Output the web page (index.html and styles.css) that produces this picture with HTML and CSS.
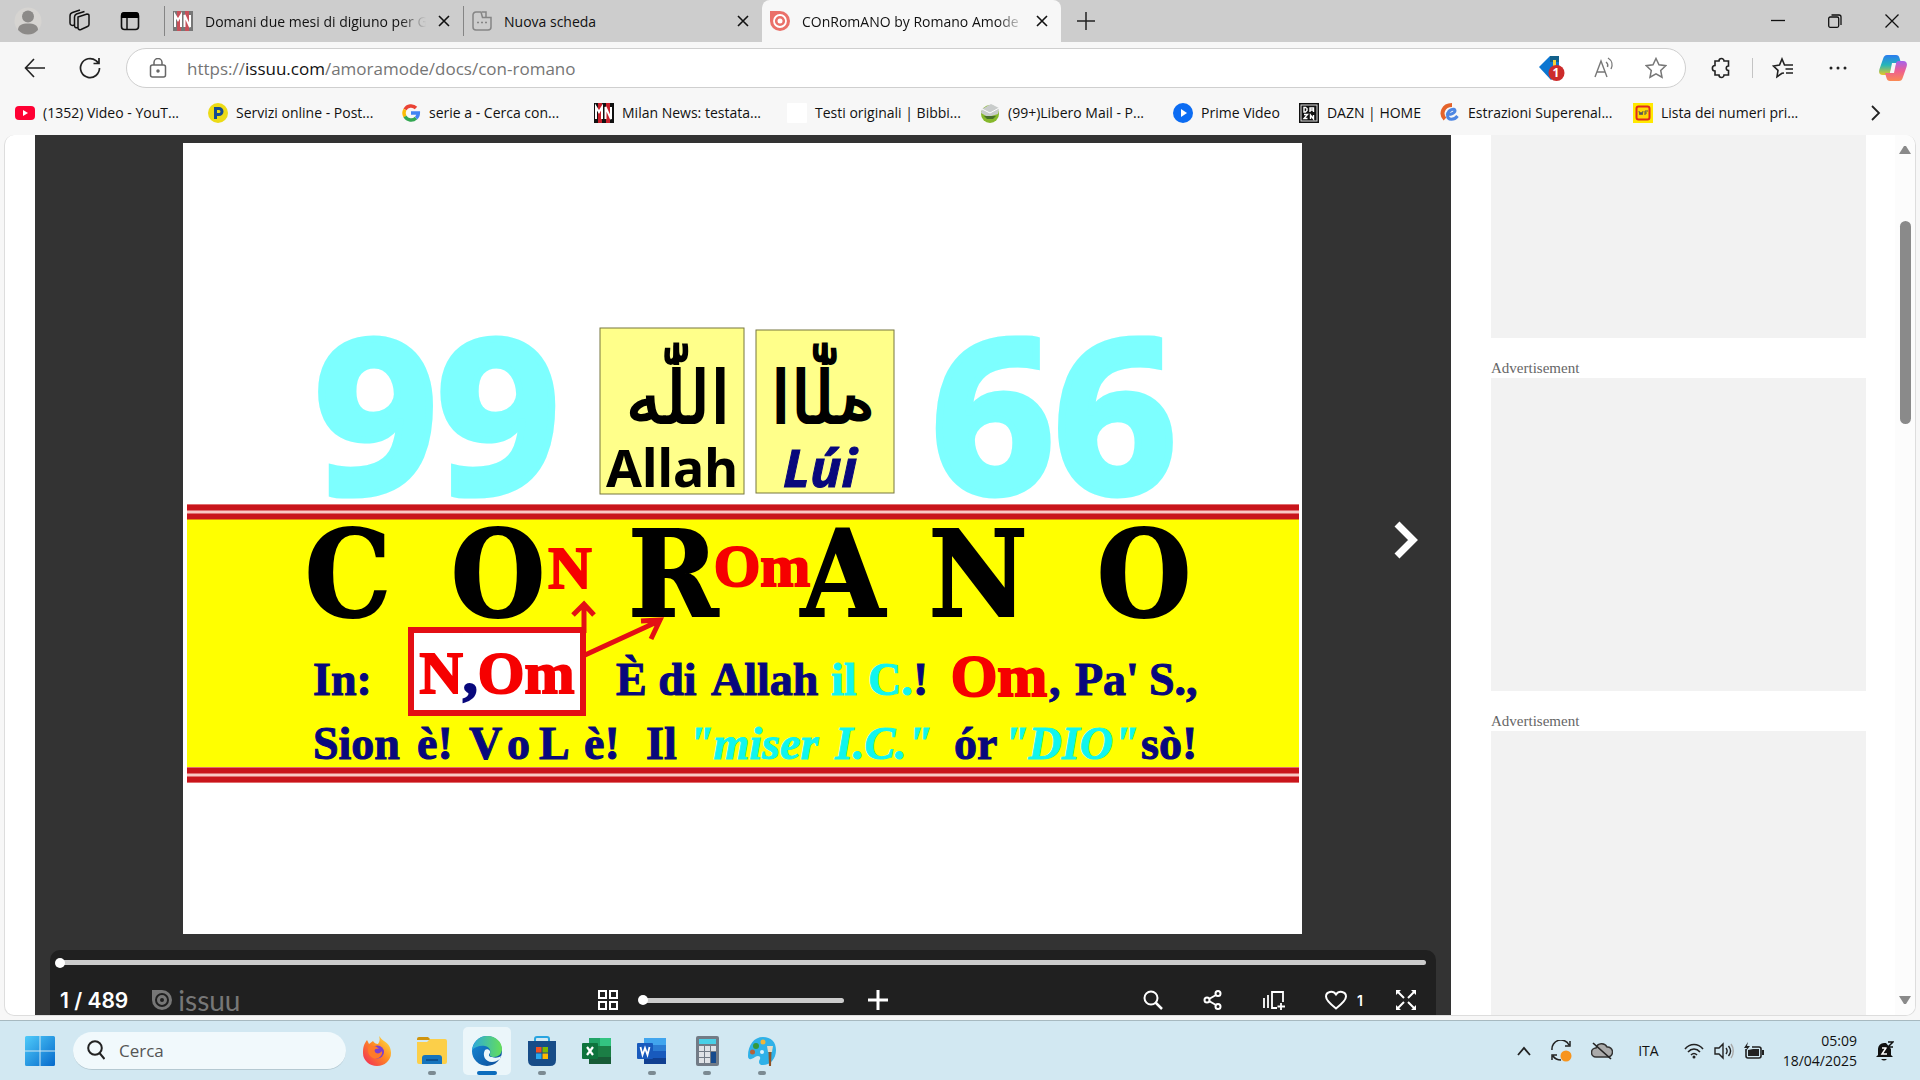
FILE: index.html
```html
<!DOCTYPE html>
<html lang="it">
<head>
    <meta charset="UTF-8">
    <meta name="viewport" content="width=device-width, initial-scale=1.0">
    <title>COnRomANO by Romano Amodeo</title>
    <link rel="stylesheet" href="styles.css">
</head>
<body>

    <header class="browser">
        <div class="tab-bar">
            <button class="icon-btn profile" aria-label="Profilo">
                <svg width="28" height="28" viewBox="0 0 28 28"><circle cx="14" cy="14" r="13.5" fill="#d6d4d1"/><circle cx="14" cy="9.500" r="6" fill="#8c8a88"/><path d="M4 23c0-5 4-6.500 10-6.500S24 18 24 23c-3 3-6 4.500-10 4.500S7 26 4 23z" fill="#8c8a88"/></svg>
            </button>
            <button class="icon-btn" aria-label="Aree di lavoro">
                <svg width="24" height="24" viewBox="0 0 24 24" fill="none" stroke="#111" stroke-width="1.500"><path d="M11 8l9-3c1 0 2 .5 2 1.500v9c0 1-.5 1.700-1.500 2l-6.500 3c-1.500.5-3 0-3-1.500z"/><path d="M11 18.500c-2 .5-3.500 0-3.500-1.500V8c0-2 1-2.500 2-3l8-2.500M7.500 16C5 17 3 16 3 14V7c0-2 1-3 2.500-3.500L13 1"/></svg>
            </button>
            <button class="icon-btn" aria-label="Schede verticali">
                <svg width="20" height="20" viewBox="0 0 20 20"><rect x="1.500" y="2" width="17" height="16.500" rx="3" fill="none" stroke="#111" stroke-width="1.600"/><path d="M1 7V4a3 3 0 0 1 3-3h12a3 3 0 0 1 3 3v3z"/><path d="M7 7v11" stroke="#111" stroke-width="1.500"/></svg>
            </button>
            <div class="tab">
                <svg width="20" height="20" viewBox="0 0 20 20"><rect width="20" height="20" fill="#777"/><path d="M4 0h4v20H4zM12 0h4v20h-4z" fill="#c8505a"/><path d="M2 16V4l3 5 3-5v12M11.500 16V4l5.500 12V4" fill="none" stroke="#fff" stroke-width="2"/></svg>
                <span class="tab-title fade">Domani due mesi di digiuno per G</span>
                <button class="close" aria-label="Chiudi scheda"><svg width="12" height="12" viewBox="0 0 12 12"><path d="M1 1l10 10M11 1L1 11" stroke="#111" stroke-width="1.600"/></svg></button>
            </div>
            <div class="tab tab-new">
                <svg width="20" height="20" viewBox="0 0 20 20" fill="none" stroke="#858585" stroke-width="1.500"><path d="M9 1H4a3 3 0 0 0-3 3v12a3 3 0 0 0 3 3h12a3 3 0 0 0 3-3V6.500h-8.500zM10 1h4v5"/><path d="M5 11.500h2M9 11.500h2M13 11.500h2"/></svg>
                <span class="tab-title">Nuova scheda</span>
                <button class="close" aria-label="Chiudi scheda"><svg width="12" height="12" viewBox="0 0 12 12"><path d="M1 1l10 10M11 1L1 11" stroke="#111" stroke-width="1.600"/></svg></button>
            </div>
            <div class="tab tab-active">
                <svg width="20" height="20" viewBox="0 0 20 20"><path d="M0 0h10a10 10 0 1 1-10 10z" fill="#ea7069"/><circle cx="10" cy="10" r="6" fill="none" stroke="#fff" stroke-width="1.800"/><circle cx="10" cy="10" r="2.500" fill="#fff"/></svg>
                <span class="tab-title fade">COnRomANO by Romano Amode</span>
                <button class="close" aria-label="Chiudi scheda"><svg width="12" height="12" viewBox="0 0 12 12"><path d="M1 1l10 10M11 1L1 11" stroke="#111" stroke-width="1.600"/></svg></button>
            </div>
            <button class="icon-btn" aria-label="Nuova scheda"><svg width="18" height="18" viewBox="0 0 18 18"><path d="M9 0v18M0 9h18" stroke="#222" stroke-width="1.500"/></svg></button>
            <div class="window-buttons">
                <button aria-label="Riduci"><svg width="14" height="14" viewBox="0 0 14 14"><path d="M0 6.500h14" stroke="#111" stroke-width="1.300"/></svg></button>
                <button aria-label="Ripristina"><svg width="14" height="14" viewBox="0 0 14 14" fill="none" stroke="#111" stroke-width="1.300"><rect x=".7" y="3" width="10" height="10.300" rx="1.500"/><path d="M3.500 1H11a2 2 0 0 1 2 2v8"/></svg></button>
                <button aria-label="Chiudi"><svg width="14" height="14" viewBox="0 0 14 14"><path d="M.5.500l13 13M13.500.500l-13 13" stroke="#111" stroke-width="1.300"/></svg></button>
            </div>
        </div>

        <div class="toolbar">
            <button class="icon-btn" aria-label="Indietro"><svg width="22" height="20" viewBox="0 0 22 20" fill="none" stroke="#222" stroke-width="1.600"><path d="M21 10H2M10 1L1.500 10l8.500 9"/></svg></button>
            <button class="icon-btn" aria-label="Aggiorna"><svg width="22" height="22" viewBox="0 0 22 22" fill="none" stroke="#222" stroke-width="1.700"><path d="M20.500 11A9.500 9.500 0 1 1 17 3.700L19.500 6M20 1v5.500h-5.500"/></svg></button>
            <div class="address">
                <svg width="18" height="20" viewBox="0 0 18 20" fill="none" stroke="#666" stroke-width="1.500"><rect x="1.500" y="7" width="15" height="12" rx="2"/><path d="M5 7V4.500a4 4 0 0 1 8 0V7"/><circle cx="9" cy="13" r="1" fill="#666"/></svg>
                <a class="url" href="#">https://<b>issuu.com</b>/amoramode/docs/con-romano</a>
                <button class="icon-btn" aria-label="Offerte">
                    <svg width="26" height="26" viewBox="0 0 26 26"><path d="M0 12L11 1h9v18l-8 6z" fill="#0b76d1"/><path d="M11 1h9v6h-9z" fill="#13618b"/><path d="M14 5h3v6h-3z" fill="#f2d33b"/><circle cx="17.500" cy="18" r="8" fill="#cc2b2b"/><text class="tag-count" x="17" y="22" text-anchor="middle">1</text></svg>
                </button>
                <button class="icon-btn" aria-label="Lettura ad alta voce"><svg width="20" height="22" viewBox="0 0 20 22" fill="none" stroke="#777" stroke-width="1.400"><path d="M1 20L7 4l6 16M3 15h8M12 5c2 1.500 2 3.500 1.500 5M14 1c4 2.500 5 7 3 11"/></svg></button>
                <button class="icon-btn" aria-label="Preferiti"><svg width="22" height="22" viewBox="0 0 22 22" fill="none" stroke="#777" stroke-width="1.500"><path d="M11 1.500l3 6.300 6.700.9-5 4.700 1.300 6.800-6-3.400-6 3.400 1.300-6.800-5-4.700 6.700-.9z"/></svg></button>
            </div>
            <button class="icon-btn" aria-label="Estensioni"><svg width="22" height="22" viewBox="0 0 22 22" fill="none" stroke="#222" stroke-width="1.600"><path d="M8 4a2.500 2.500 0 0 1 5 0h4.500v5c-3 0-3 4.500 0 4.500V18H13a2.500 2.500 0 0 1-5 0H4v-4c-3.500 0-3.500-5.500 0-5.500V4z"/></svg></button>
            <span class="divider"></span>
            <button class="icon-btn" aria-label="Elenco preferiti"><svg width="22" height="22" viewBox="0 0 22 22" fill="none" stroke="#222" stroke-width="1.600"><path d="M12 16l-2 .3-5 3.400 1-6.300L1.500 9l6-1L10 2l2.500 6H21M13.500 12H21M14 16h7"/></svg></button>
            <button class="icon-btn" aria-label="Altro"><svg width="18" height="4" viewBox="0 0 18 4" fill="#222"><circle cx="2" cy="2" r="1.500"/><circle cx="9" cy="2" r="1.500"/><circle cx="16" cy="2" r="1.500"/></svg></button>
            <button class="icon-btn" aria-label="Copilot">
                <svg width="28" height="26" viewBox="0 0 28 26">
                    <defs>
                        <linearGradient id="cp1" x1="0" y1="0" x2="0" y2="1"><stop offset="0" stop-color="#2a7cf0"/><stop offset=".5" stop-color="#26b6b8"/><stop offset="1" stop-color="#e8c723"/></linearGradient>
                        <linearGradient id="cp2" x1="0" y1="0" x2="0" y2="1"><stop offset="0" stop-color="#a463ec"/><stop offset=".5" stop-color="#ee5f91"/><stop offset="1" stop-color="#fa8a52"/></linearGradient>
                    </defs>
                    <path d="M8 0h9c2 0 3 1 3.500 3L22 8h-5c-3 0-3 2-4 5l-2 5c-1 2-2 2-4 2H4c-4 0-4.500-3-3.500-6L4 4c1-3 2-4 4-4z" fill="url(#cp1)"/>
                    <path d="M20 26h-9c-2 0-3-1-3.500-3L6 18h5c3 0 3-2 4-5l2-5c1-2 2-2 4-2h3c4 0 4.500 3 3.500 6L24 22c-1 3-2 4-4 4z" fill="url(#cp2)"/>
                    <path d="M13 8h4l-2 10h-4z" fill="#f7f7f7"/>
                </svg>
            </button>
        </div>

        <nav class="bookmarks">
            <a href="#"><svg width="20" height="20" viewBox="0 0 20 20"><rect y="3" width="20" height="14" rx="4" fill="#f03"/><path d="M8 7l5 3-5 3z" fill="#fff"/></svg>(1352) Video - YouT...</a>
            <a href="#"><svg width="20" height="20" viewBox="0 0 20 20"><circle cx="10" cy="10" r="10" fill="#ecdb16"/><path d="M7.500 16V5.500H11a3 3 0 0 1 0 6H8" fill="none" stroke="#164a91" stroke-width="3"/></svg>Servizi online - Post...</a>
            <a href="#"><svg width="20" height="20" viewBox="0 0 20 20" fill="none" stroke-width="3.500"><path d="M4 6.500A7 7 0 0 1 15 5" stroke="#ea4335"/><path d="M4 13.500a7 7 0 0 1 0-7" stroke="#fbbc05"/><path d="M15 15a7 7 0 0 1-11-1.500" stroke="#34a853"/><path d="M10 10h7.300c0 2-.8 4-2.300 5" stroke="#4285f4"/></svg>serie a - Cerca con...</a>
            <a href="#"><svg width="20" height="20" viewBox="0 0 20 20"><rect width="20" height="20" fill="#111"/><path d="M4 0h4v20H4zM12 0h4v20h-4z" fill="#c8202c"/><path d="M2 16V4l3 5 3-5v12M11.500 16V4l5.500 12V4" fill="none" stroke="#fff" stroke-width="2"/></svg>Milan News: testata...</a>
            <a href="#"><svg width="20" height="20" viewBox="0 0 20 20"><rect width="20" height="20" rx="1" fill="#fff"/></svg>Testi originali | Bibbi...</a>
            <a href="#"><svg width="20" height="20" viewBox="0 0 20 20"><circle cx="10" cy="11" r="9" fill="#86b82c"/><path d="M2 6l9-5 8 4-1 6-10 3-7-4z" fill="#c9cccb"/><path d="M2 6l8 4 9-5" fill="none" stroke="#fff"/><path d="M4 13h12l-3 3H7z" fill="#49702a"/></svg>(99+)Libero Mail - P...</a>
            <a class="short" href="#"><svg width="20" height="20" viewBox="0 0 20 20"><circle cx="10" cy="10" r="10" fill="#0c6cf2"/><path d="M8 6l6 4-6 4z" fill="#fff"/></svg>Prime Video</a>
            <a class="short" href="#"><svg width="20" height="20" viewBox="0 0 20 20"><rect width="20" height="20" fill="#111"/><rect x="2" y="2" width="16" height="16" fill="none" stroke="#ddd"/><path d="M5 4.500h1.500l1.500 1v2L6.500 9H5zM11 9V5h3.500v4M11 7h3.500M5 11.500h3.500L5 15.500h3.500M11.500 16v-4l3 4v-4" fill="none" stroke="#fff" stroke-width="1.400"/></svg>DAZN | HOME</a>
            <a href="#"><svg width="20" height="20" viewBox="0 0 20 20" fill="none" stroke-width="4"><path d="M5 16C0 11 3 2 12 2" stroke="#e4632b"/><path d="M6 11c5 1 9-1 9-3.500S8 6 7.500 12c0 6 7 5 10 1" stroke="#4e86e2" stroke-width="3"/></svg>Estrazioni Superenal...</a>
            <a href="#"><svg width="20" height="20" viewBox="0 0 20 20"><rect width="20" height="20" fill="#ffe900"/><rect x="3.500" y="3.500" width="13" height="13" rx="2" fill="#ffd800" stroke="#e02a1c" stroke-width="2"/><path d="M6 8l1 4 1-3 1 3 1-4M12 12V8h3M12 10h2" fill="none" stroke="#555"/></svg>Lista dei numeri pri...</a>
            <button class="icon-btn more" aria-label="Altri preferiti"><svg width="10" height="16" viewBox="0 0 10 16"><path d="M1 1l7 7-7 7" fill="none" stroke="#222" stroke-width="1.800"/></svg></button>
        </nav>
    </header>

    <main class="page">
        <section class="reader">
            <div class="stage">
                <svg class="cover" viewBox="0 0 1119 791" role="img" aria-label="Copertina">
                    <rect width="1119" height="791" fill="#fff"/>
                    <g class="numbers">
                        <text x="254" y="350" text-anchor="middle">99</text>
                        <text x="871" y="350" text-anchor="middle">66</text>
                    </g>

                    <g fill="#ffff8a" stroke="#77773f">
                        <rect x="417" y="185" width="144" height="166"/>
                        <rect x="573" y="187" width="138" height="163"/>
                    </g>
                    <text class="arabic" x="495" y="280" text-anchor="middle">اللّٰه</text>
                    <text class="arabic" x="-640" y="280" text-anchor="middle" transform="scale(-1 1)">اللّٰه</text>
                    <text class="panel-name" x="489" y="344" text-anchor="middle">Allah</text>
                    <text class="panel-name navy italic" x="637" y="344" text-anchor="middle">Lúi</text>

                    <!-- yellow band between double red rules -->
                    <rect x="4" y="361" width="1112" height="279" fill="#f9c9c4"/>
                    <rect x="4" y="376" width="1112" height="248" fill="#ff0"/>
                    <path d="M4 364.500h1112M4 373.500h1112M4 627.500h1112M4 636.500h1112" stroke="#c9151b" stroke-width="6"/>

                    <g class="title-letters">
                        <text x="165" y="473" text-anchor="middle">C</text>
                        <text x="315" y="473" text-anchor="middle">O</text>
                        <text x="490" y="473" text-anchor="middle">R</text>
                        <text x="660" y="473" text-anchor="middle">A</text>
                        <text x="795" y="473" text-anchor="middle">N</text>
                        <text x="961" y="473" text-anchor="middle">O</text>
                    </g>
                    <g class="red-letters">
                        <text x="387" y="445" text-anchor="middle">N</text>
                        <text x="579" y="443" text-anchor="middle">Om</text>
                    </g>

                    <rect x="228" y="487" width="172" height="83" fill="#fff" stroke="#e30f14" stroke-width="6"/>
                    <g fill="none" stroke="#e30f14" stroke-width="5">
                        <path d="M401 490V463M390 472l11-11 10 11"/>
                        <path d="M402 512l74-34M458 478l19-1-9 19"/>
                    </g>
                    <g class="red-letters">
                        <text x="314" y="550" text-anchor="middle">N<tspan class="navy">,</tspan>Om</text>
                        <text x="816" y="553" text-anchor="middle">Om</text>
                    </g>

                    <g class="verse">
                        <text x="130" y="552">In:</text>
                        <text x="433" y="552">È di</text>
                        <text x="528" y="552">Allah</text>
                        <text class="cyan" x="648" y="552">il</text>
                        <text class="cyan" x="685" y="552">C.</text>
                        <text x="730" y="552">!</text>
                        <text x="866" y="552">,</text>
                        <text x="892" y="552">Pa'</text>
                        <text x="966" y="552">S.,</text>
                        <text x="130" y="616">Sion</text>
                        <text x="234" y="616">è!</text>
                        <text x="286" y="616">V</text>
                        <text x="324" y="616">o</text>
                        <text x="356" y="616">L</text>
                        <text x="401" y="616">è!</text>
                        <text x="463" y="616">Il</text>
                        <text class="cyan italic" x="505" y="616">"miser</text>
                        <text class="cyan italic" x="652" y="616">I.C."</text>
                        <text x="771" y="616">ór</text>
                        <text class="cyan italic" x="820" y="616">"DIO"</text>
                        <text x="958" y="616">sò!</text>
                    </g>
                </svg>
                <button class="next" aria-label="Pagina successiva"><svg width="24" height="38" viewBox="0 0 24 38"><path d="M3 3l16 16L3 35" fill="none" stroke="#fff" stroke-width="7"/></svg></button>
            </div>

            <div class="controls">
                <input class="range" type="range" min="1" max="489" value="1" aria-label="Pagina">
                <div class="control-row">
                    <div class="control-left">
                        <span class="page-count">1 / 489</span>
                        <a class="logo" href="#"><svg width="20" height="20" viewBox="0 0 20 20"><path d="M0 0h10a10 10 0 1 1-10 10z" fill="#777"/><circle cx="10" cy="10" r="6" fill="none" stroke="#202020" stroke-width="2"/><circle cx="10" cy="10" r="2" fill="#202020"/></svg>issuu</a>
                    </div>
                    <div class="control-center">
                        <button aria-label="Miniature"><svg width="20" height="20" viewBox="0 0 20 20" fill="none" stroke="#fff" stroke-width="2"><path d="M1 1h7v7H1zM12 1h7v7h-7zM1 12h7v7H1zM12 12h7v7h-7z"/></svg></button>
                        <input class="range zoom" type="range" min="0" max="100" value="0" aria-label="Zoom">
                        <button aria-label="Ingrandisci"><svg width="20" height="20" viewBox="0 0 20 20"><path d="M10 0v20M0 10h20" stroke="#fff" stroke-width="3"/></svg></button>
                    </div>
                    <div class="control-right">
                        <button aria-label="Cerca"><svg width="20" height="20" viewBox="0 0 20 20" fill="none" stroke="#fff" stroke-width="2"><circle cx="8" cy="8" r="6.500"/><path d="M12.500 12.500L19 19" stroke-width="2.500"/></svg></button>
                        <button aria-label="Condividi"><svg width="20" height="20" viewBox="0 0 20 20" fill="none" stroke="#fff" stroke-width="2"><circle cx="4" cy="10" r="2.500"/><circle cx="15" cy="3.500" r="2.500"/><circle cx="15" cy="16.500" r="2.500"/><path d="M6 9l7-4M6 11l7 4"/></svg></button>
                        <button aria-label="Aggiungi alla raccolta"><svg width="22" height="20" viewBox="0 0 22 20" fill="none" stroke="#fff" stroke-width="1.800"><path d="M1 8v10M5 5v13M14 18H9V2h11v10M18 13v7M14.500 16.500H22"/></svg></button>
                        <button class="like" aria-label="Mi piace"><svg width="22" height="20" viewBox="0 0 22 20"><path d="M11 18.500C4 13 1 10 1 6.500 1 1.500 8 0 11 4.500 14 0 21 1.500 21 6.500c0 3.500-3 6.500-10 12z" fill="none" stroke="#fff" stroke-width="2"/></svg>1</button>
                        <button aria-label="Schermo intero"><svg width="20" height="20" viewBox="0 0 20 20" stroke="#fff" stroke-width="2"><path d="M2 2l6 6M18 2l-6 6M2 18l6-6M18 18l-6-6"/><path d="M0 0h5L0 5zM20 0v5l-5-5zM0 20v-5l5 5zM20 20h-5l5-5z" fill="#fff" stroke="none"/></svg></button>
                    </div>
                </div>
            </div>
        </section>

        <aside class="ads">
            <div class="ad ad-first"></div>
            <p>Advertisement</p>
            <div class="ad"></div>
            <p>Advertisement</p>
            <div class="ad"></div>
        </aside>

        <div class="scrollbar">
            <svg width="12" height="10" viewBox="0 0 12 10"><path d="M5 1h2l5 8H0z" fill="#8a8a8a"/></svg>
            <div class="thumb"></div>
            <svg class="down" width="12" height="10" viewBox="0 0 12 10"><path d="M0 1h12L7 9H5z" fill="#8a8a8a"/></svg>
        </div>
    </main>

    <footer class="taskbar">
        <button class="app" aria-label="Start"><svg width="30" height="30" viewBox="0 0 30 30"><defs><linearGradient id="win" x1="0" y1="0" x2="1" y2="1"><stop offset="0" stop-color="#4fcbfa"/><stop offset="1" stop-color="#0669cb"/></linearGradient></defs><path d="M0 1.500Q0 0 1.500 0h13v14.500H0zM15.500 0h13Q30 0 30 1.500v13H15.500zM0 15.500h14.500V30h-13Q0 30 0 28.500zM15.500 15.500H30v13q0 1.500-1.500 1.500h-13z" fill="url(#win)"/></svg></button>
        <label class="search">
            <svg width="18" height="20" viewBox="0 0 18 20" fill="none" stroke="#222" stroke-width="2"><circle cx="8" cy="8" r="6.800"/><path d="M12.500 13l5 6"/></svg>
            <input type="text" placeholder="Cerca">
        </label>
        <button class="app" aria-label="Firefox"><svg width="30" height="30" viewBox="0 0 30 30"><defs><linearGradient id="ff" x1="1" y1="0" x2="0" y2="1"><stop offset="0" stop-color="#fff04a"/><stop offset=".45" stop-color="#ff8b22"/><stop offset="1" stop-color="#f0225e"/></linearGradient></defs><path d="M17 0c2 2 3 4 5 5 5 3 7 7 7 12a14 13 0 0 1-28 0C1 11 2 8 5 4l2 4 4-3c1 2 3 3 5 3 2-3 2-5 1-8z" fill="url(#ff)"/><circle cx="15.500" cy="16" r="6.500" fill="#7b3fd0"/><path d="M7 10c4-1 8 0 10 3-4-1-5 1-4 3s5 2 7-1c1 5-4 9-9 7s-6-8-4-12z" fill="#ff7a29"/></svg></button>
        <button class="app running" aria-label="Esplora file"><svg width="30" height="30" viewBox="0 0 30 30"><path d="M0 3q0-2 2-2h9l3 3H0z" fill="#d0940e"/><path d="M0 6h10l3-3h15q2 0 2 2v21q0 2-2 2H2q-2 0-2-2z" fill="#fccf49"/><path d="M5 28v-6q0-3 3-3h14q3 0 3 3v6z" fill="#1674bd"/><path d="M9 23h12v2H9z" fill="#0d5291"/></svg></button>
        <button class="app running current" aria-label="Edge"><svg width="30" height="30" viewBox="0 0 30 30"><defs><linearGradient id="eg1"><stop offset="0" stop-color="#2ca8dd"/><stop offset="1" stop-color="#65df58"/></linearGradient><linearGradient id="eg2" x1="0" y1="0" x2="1" y2="1"><stop offset="0" stop-color="#168edc"/><stop offset="1" stop-color="#0c4a97"/></linearGradient></defs><circle cx="15" cy="15" r="15" fill="url(#eg2)"/><path d="M0 14C2 4 9 0 15 0c9 0 15 6 15 13 0 5-4 8-8 8-3 0-5-1-4-3 1-3 0-7-5-8C8 9 3 11 0 14z" fill="url(#eg1)"/><path d="M13 14c-3 5 0 12 7 12 3 0 5-1 8-3l1-3c-3 2-6 2-9 1-3 0-4-2-2-4 1-3-3-5-5-3z" fill="#eaf6fb"/></svg></button>
        <button class="app running" aria-label="Microsoft Store"><svg width="30" height="30" viewBox="0 0 30 30"><path d="M8 7V3q0-2 2-2h10q2 0 2 2v4" fill="none" stroke="#28a4e0" stroke-width="2"/><path d="M1 5h28v19q0 6-6 6H7q-6 0-6-6z" fill="#174c88"/><path d="M9 11h5.500v5.500H9z" fill="#f25022"/><path d="M15.500 11H21v5.500h-5.500z" fill="#7fba00"/><path d="M9 17.500h5.500V23H9z" fill="#28a8ef"/><path d="M15.500 17.500H21V23h-5.500z" fill="#ffb900"/></svg></button>
        <button class="app" aria-label="Excel"><svg width="30" height="30" viewBox="0 0 30 30"><path d="M7 2h22v26H7z" fill="#1b7e45"/><path d="M18 2h11v8H18z" fill="#33c481"/><path d="M7 2h11v8H7z" fill="#21a366"/><path d="M7 21h22v7H7z" fill="#185c37"/><rect y="7" width="16" height="16" rx="1" fill="#0d733c"/><path d="M5 11l6 8M11 11l-6 8" stroke="#fff" stroke-width="2.200"/></svg></button>
        <button class="app running" aria-label="Word"><svg width="30" height="30" viewBox="0 0 30 30"><path d="M7 2h22v26H7z" fill="#2b7cd3"/><path d="M7 2h22v7H7z" fill="#41a5ee"/><path d="M7 15h22v7H7z" fill="#185abd"/><path d="M7 22h22v6H7z" fill="#103f91"/><rect y="7" width="16" height="16" rx="1" fill="#185abd"/><path d="M3.500 11l2 8L8 12l2.500 7 2-8" fill="none" stroke="#fff" stroke-width="1.800"/></svg></button>
        <button class="app running" aria-label="Calcolatrice"><svg width="30" height="30" viewBox="0 0 30 30"><rect x="4" width="23" height="30" rx="2" fill="#727b86"/><path d="M7 3h17v5H7z" fill="#49cfe6"/><path d="M7 10h5v5H7zM13 10h5v5h-5zM19 10h5v5h-5zM7 16h5v5H7zM13 16h5v5h-5zM7 22h5v5H7zM13 22h5v5h-5z" fill="#dfe2e6"/><path d="M19 16h5v11h-5z" fill="#174b8d"/></svg></button>
        <button class="app running" aria-label="Paint"><svg width="30" height="30" viewBox="0 0 30 30"><path d="M16 1c8 0 13 5 13 13 0 9-6 15-13 15-4 0-5-3-3-6 1-3-2-4-5-2-4 3-7 3-7-1C1 9 7 1 16 1z" fill="#2fb1e8"/><circle cx="9" cy="10" r="3" fill="#36983b"/><circle cx="16" cy="6" r="2.500" fill="#f0b636"/><circle cx="5.500" cy="16" r="2.500" fill="#b4623a"/><circle cx="15" cy="16" r="2" fill="#d8f1fb"/><path d="M20 10h6l-1 6h-4z" fill="#e5dcc7"/><path d="M21.500 16h3l-.5 14h-2z" fill="#915326"/></svg></button>

        <div class="tray">
            <svg width="14" height="10" viewBox="0 0 14 10"><path d="M1 9l6-7 6 7" fill="none" stroke="#222" stroke-width="1.800"/></svg>
            <svg width="22" height="22" viewBox="0 0 22 22" fill="none" stroke="#222" stroke-width="1.500"><path d="M2 10A9 9 0 0 1 19 5M20 1v5h-5M11 20c-4 0-6-1-8-4M2 20v-5h5"/><circle cx="16" cy="16" r="5.500" fill="#f7941d" stroke="none"/></svg>
            <svg width="22" height="20" viewBox="0 0 22 20"><path d="M5 16a4.500 4.500 0 0 1 0-9 6 6 0 0 1 11-1 5 5 0 0 1 1 10z" fill="#aaa" stroke="#333" stroke-width="1.500"/><path d="M2 2l18 16" stroke="#222" stroke-width="1.600"/></svg>
            <span class="lang">ITA</span>
            <span class="status">
                <svg width="20" height="16" viewBox="0 0 20 16" fill="none" stroke="#222" stroke-width="1.600"><path d="M1 6c5-6 13-6 18 0M4 9c3.500-4 8.500-4 12 0M7 12c2-2 4-2 6 0"/><circle cx="10" cy="14" r="1.500" fill="#222" stroke="none"/></svg>
                <svg width="20" height="18" viewBox="0 0 20 18" fill="none" stroke="#222" stroke-width="1.400"><path d="M1 6h4l4-4v14l-4-4H1zM12 6c1.500 2 1.500 4 0 6M14.500 4c2.500 3 2.500 7 0 10"/><path d="M17 2c3 4 3 10 0 14" stroke="#aaa"/></svg>
                <svg width="20" height="18" viewBox="0 0 20 18"><path d="M2 7v7q0 2 2 2h11q2 0 2-2V7q0-2-2-2H8" fill="none" stroke="#222" stroke-width="1.600"/><path d="M4 8l5-1h6v7H4zM18 8h2v5h-2zM4 0L0 6h3L1 10l5-6H3z" fill="#222"/></svg>
            </span>
            <time class="clock">05:09<br>18/04/2025</time>
            <svg width="18" height="20" viewBox="0 0 18 20"><path d="M2 14V8a6 6 0 0 1 6-6h2l5 6v6l2 2H0zM5 18h6q-3 3-6 0z" fill="#111"/><path d="M6 7h4l-4 6h5" fill="none" stroke="#fff" stroke-width="1.500"/><path d="M12 1h5l-5 5h5" fill="none" stroke="#111" stroke-width="1.500"/></svg>
        </div>
    </footer>

</body>
</html>
```
FILE: styles.css
```css
* {
    box-sizing: border-box;
}
body {
    margin: 0;
    height: 100vh;
    display: flex;
    flex-direction: column;
    overflow: hidden;
    background: #f7f7f7;
    color: #111;
    font-family: "Open Sans", "Noto Sans", sans-serif;
    font-size: 14px;
}
button {
    padding: 0;
    border: none;
    background: none;
    color: inherit;
    font: inherit;
    cursor: pointer;
}
a {
    color: inherit;
    text-decoration: none;
}
svg {
    display: block;
    flex: none;
}
.icon-btn {
    width: 32px;
    height: 32px;
    display: flex;
    justify-content: center;
    align-items: center;
    flex: none;
}

/* Tabs */
.tab-bar {
    height: 42px;
    display: flex;
    align-items: center;
    gap: 19px;
    padding-left: 12px;
    background: #cdcdcd;
}
.tab-bar > .tab {
    margin-left: -1px;
}
.tab {
    width: 299px;
    height: 30px;
    display: flex;
    align-items: center;
    gap: 12px;
    padding: 0 13px 0 8px;
    border-left: 1px solid #858585;
}
.tab-bar > .tab + .tab {
    margin-left: -19px;
}
.tab-title {
    flex: 1;
    overflow: hidden;
    white-space: nowrap;
}
.fade {
    -webkit-mask-image: linear-gradient(to right, #000 88%, transparent);
    mask-image: linear-gradient(to right, #000 88%, transparent);
}
.tab-active {
    height: 42px;
    border: none;
    border-radius: 8px 8px 0 0;
    background: #f7f7f7;
}
.tab-bar > .tab-active + .icon-btn {
    margin-left: -10px;
}
.window-buttons {
    display: flex;
    margin-left: auto;
}
.window-buttons button {
    width: 57px;
    height: 42px;
    display: flex;
    justify-content: center;
    align-items: center;
}

/* Address bar */
.toolbar {
    height: 52px;
    display: flex;
    align-items: center;
    gap: 20px;
    padding: 0 11px 0 19px;
}
.toolbar > .icon-btn + .icon-btn {
    margin-left: 3px;
}
.address {
    flex: 1;
    height: 40px;
    display: flex;
    align-items: center;
    gap: 20px;
    padding: 0 13px 0 22px;
    border: 1px solid #cfcfcf;
    border-radius: 20px;
    background: #fff;
}
.url {
    flex: 1;
    color: #757575;
    font-size: 17px;
}
.url b {
    color: #111;
    font-weight: normal;
}
.tag-count {
    fill: #fff;
    font-size: 12px;
    font-weight: bold;
}
.divider {
    width: 1px;
    height: 20px;
    margin: 0 -6px;
    background: #c4c4c4;
}

/* Bookmarks */
.bookmarks {
    height: 41px;
    display: flex;
    align-items: center;
    padding: 0 28px 4px 15px;
    white-space: nowrap;
}
.bookmarks a {
    min-width: 193px;
    display: flex;
    align-items: center;
    gap: 8px;
    padding-right: 19px;
}
.bookmarks .short {
    min-width: 0;
}
.bookmarks .more {
    margin-left: auto;
}

/* Page */
.page {
    flex: 1;
    min-height: 0;
    display: flex;
    margin: 0 4px 4px;
    overflow: hidden;
    border: 1px solid #ddd;
    border-top: none;
    border-radius: 10px;
    background: #fff;
}
.reader {
    flex: 1;
    display: flex;
    flex-direction: column;
    margin-left: 30px;
    padding: 0 15px;
    background: #333;
}
.stage {
    flex: 1;
    min-height: 0;
    display: grid;
    grid-template-columns: minmax(0, 133fr) minmax(0, 1119fr) minmax(0, 134fr);
    padding-top: 8px;
}
.cover {
    grid-column: 2;
    width: 100%;
    height: auto;
}
.next {
    align-self: center;
    justify-self: end;
    margin: 0 18px 14px 0;
}

/* Cover art */
.numbers {
    fill: #7dffff;
    stroke: #7dffff;
    stroke-width: 7;
    font-family: "Open Sans", sans-serif;
    font-size: 214px;
    font-weight: bold;
}
.arabic {
    fill: #000;
    stroke: #000;
    stroke-width: 2;
    font-family: "DejaVu Sans", sans-serif;
    font-size: 72px;
}
.panel-name {
    font-family: "Noto Sans", sans-serif;
    font-size: 52px;
    font-weight: bold;
}
.title-letters {
    stroke: #000;
    stroke-width: 2;
    font-family: "DejaVu Serif Condensed", "DejaVu Serif", serif;
    font-size: 120px;
    font-weight: bold;
}
.red-letters {
    fill: #f60000;
    stroke: #f60000;
    stroke-width: 2;
    font-family: "Liberation Serif", serif;
    font-size: 60px;
    font-weight: bold;
}
.verse {
    fill: #08087c;
    stroke: #08087c;
    stroke-width: 1;
    font-family: "Liberation Serif", serif;
    font-size: 46px;
    font-weight: bold;
}
.navy {
    fill: #08087c;
    stroke: #08087c;
}
.cyan {
    fill: #10f5ee;
    stroke: #10f5ee;
}
.italic {
    font-style: italic;
}

/* Reader controls */
.controls {
    height: 65px;
    padding: 10px 10px 0 5px;
    border-radius: 10px 10px 0 0;
    background: #202020;
    color: #fff;
    font-family: Inter, sans-serif;
}
.range {
    -webkit-appearance: none;
    appearance: none;
    display: block;
    width: 100%;
    height: 5px;
    margin: 0;
    border-radius: 3px;
    background: linear-gradient(#ccc, #ccc) 5px 0 no-repeat;
}
.range::-webkit-slider-thumb {
    -webkit-appearance: none;
    width: 10px;
    height: 10px;
    border-radius: 50%;
    background: #fff;
}
.control-row {
    display: grid;
    grid-template-columns: 1fr auto 1fr;
    align-items: center;
    height: 70px;
    margin-left: 5px;
}
.control-left,
.control-center,
.control-right {
    display: flex;
    align-items: center;
}
.control-left {
    gap: 24px;
}
.page-count {
    font-size: 21px;
    font-weight: 600;
}
.logo {
    display: flex;
    align-items: center;
    gap: 6px;
    color: #777;
    font-family: Lato, sans-serif;
    font-size: 28px;
    line-height: 20px;
}
.control-center {
    gap: 24px;
}
.control-center .zoom {
    width: 206px;
    margin-left: -4px;
}
.control-right {
    justify-content: flex-end;
    gap: 40px;
    padding-right: 10px;
}
.like {
    display: flex;
    align-items: center;
    gap: 10px;
    margin-right: -7px;
    font-weight: 600;
}

/* Ads */
.ads {
    padding: 0 29px 0 40px;
    color: #666;
    font-family: "Liberation Serif", serif;
    font-size: 15px;
}
.ads p {
    margin: 22px 0 1px;
    line-height: 17px;
}
.ad {
    width: 375px;
    height: 313px;
    background: #f2f2f2;
}
.ad-first {
    height: 203px;
}
.scrollbar {
    width: 20px;
    display: flex;
    flex-direction: column;
    align-items: center;
    padding: 10px 0;
    background: #fcfcfc;
}
.thumb {
    width: 11px;
    height: 203px;
    margin-top: 66px;
    border-radius: 6px;
    background: #8a8a8a;
}
.scrollbar .down {
    margin-top: auto;
}

/* Taskbar */
.taskbar {
    height: 60px;
    display: flex;
    align-items: center;
    gap: 7px;
    padding: 0 26px 0 16px;
    border-top: 1px solid #a7b9c0;
    background: #d2e8f2;
}
.app {
    position: relative;
    width: 48px;
    height: 48px;
    display: flex;
    justify-content: center;
    align-items: center;
    border-radius: 5px;
}
.running::after {
    content: "";
    position: absolute;
    bottom: 0;
    width: 8px;
    height: 4px;
    border-radius: 2px;
    background: #7b8a92;
}
.current {
    background: #ebf6fa;
}
.current::after {
    width: 20px;
    background: #0b6cbd;
}
.search {
    width: 273px;
    height: 38px;
    display: flex;
    align-items: center;
    gap: 12px;
    margin-left: 2px;
    padding-left: 14px;
    border-bottom: 1px solid #b5c9d2;
    border-radius: 19px;
    background: #f1f9fc;
}
.search input {
    width: 200px;
    border: none;
    outline: none;
    background: none;
    font: inherit;
    font-size: 17px;
}
.search input::placeholder {
    color: #555;
}
.tray {
    display: flex;
    align-items: center;
    gap: 19px;
    margin-left: auto;
}
.lang {
    margin: 0 6px;
}
.status {
    display: flex;
    align-items: center;
    gap: 10px;
}
.clock {
    text-align: right;
    line-height: 20px;
}
```
